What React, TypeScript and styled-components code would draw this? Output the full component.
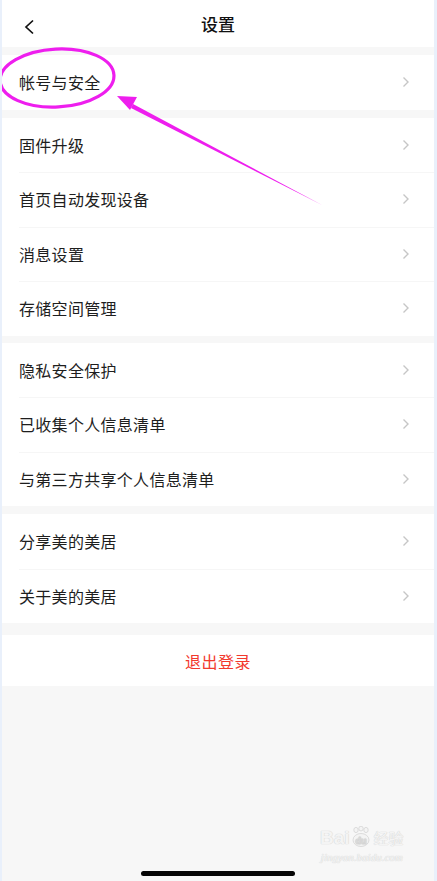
import React from "react";
import styled, { createGlobalStyle } from "styled-components";

const GlobalStyle = createGlobalStyle`
  html, body {
    margin: 0;
    padding: 0;
    background: #e9f0fb;
  }
  body {
    font-family: "Noto Sans CJK SC", "Noto Sans", sans-serif;
  }
`;

const Screen = styled.div`
  position: relative;
  margin: 0 3px 0 2px;
  height: 881px;
  background: #f7f7f7;
  overflow: hidden;
  display: flex;
  flex-direction: column;
`;

const Header = styled.div`
  height: 47px;
  background: #fff;
  display: flex;
  align-items: center;
  justify-content: center;
  position: relative;
`;

const BackButton = styled.div`
  position: absolute;
  left: 20px;
  top: 16px;
  width: 16px;
  height: 16px;
`;

const Title = styled.div`
  font-size: 17px;
  font-weight: 500;
  color: #111;
`;

const Group = styled.div<{ gap?: number }>`
  margin-top: ${(p) => p.gap ?? 8}px;
  background: #fff;
`;

const Row = styled.div`
  height: 54.5px;
  display: flex;
  align-items: center;
  padding-left: 17px;
  padding-right: 24px;
  position: relative;
  & + &::after {
    content: "";
    position: absolute;
    left: 17px;
    right: 0;
    top: 0;
    height: 1px;
    background: #f6f6f6;
  }
`;

const Label = styled.div`
  flex: 1;
  font-size: 16px;
  color: #1e1e1e;
  letter-spacing: 0.3px;
`;

const LogoutRow = styled.div`
  height: 51px;
  display: flex;
  align-items: center;
  justify-content: center;
  font-size: 16px;
  color: #f2392d;
  letter-spacing: 0.5px;
`;

const HomeBar = styled.div`
  position: absolute;
  left: 139px;
  bottom: 5px;
  width: 154px;
  height: 5px;
  border-radius: 3px;
  background: #050505;
`;

const Annotation = styled.svg`
  position: absolute;
  left: -2px;
  top: 0;
  pointer-events: none;
`;

const Watermark = styled.div`
  position: absolute;
  left: 318px;
  top: 826px;
  display: flex;
  flex-direction: column;
  align-items: center;
  white-space: nowrap;
  color: #f4f4f4;
  text-shadow: 0 0 1px #d4d4d4, 0 0 1px #d4d4d4;
`;

const WatermarkLogo = styled.div`
  display: flex;
  align-items: flex-end;
  font-family: "Liberation Sans", sans-serif;
  font-size: 19px;
  font-weight: 700;
  line-height: 20px;
`;

const WatermarkCn = styled.span`
  font-family: "Noto Sans CJK SC", sans-serif;
  font-size: 15px;
  font-weight: 400;
  margin-left: 2px;
`;

const WatermarkUrl = styled.div`
  font-family: "Liberation Serif", serif;
  font-style: italic;
  font-size: 11px;
  margin-top: 3px;
`;

const Chevron = () => (
  <svg width="8" height="12" viewBox="0 0 8 12">
    <path d="M1.5 1.5 L6 6 L1.5 10.5" fill="none" stroke="#c6c6c6" strokeWidth="1.4" />
  </svg>
);

const Paw = () => (
  <svg width="20" height="22" viewBox="0 0 20 22" style={{ margin: "0 1px" }}>
    <g fill="#f4f4f4" stroke="#d4d4d4" strokeWidth="0.8">
      <ellipse cx="5" cy="4" rx="2.2" ry="2.6" />
      <ellipse cx="10" cy="2.6" rx="2.2" ry="2.4" />
      <ellipse cx="15" cy="4" rx="2.2" ry="2.6" />
      <ellipse cx="10" cy="14" rx="8" ry="6.5" />
    </g>
    <text x="10" y="18" textAnchor="middle" fontSize="9" fill="#f4f4f4" stroke="#d4d4d4" strokeWidth="0.5" fontFamily="Liberation Sans">
      du
    </text>
  </svg>
);

const Item = ({ label }: { label: string }) => (
  <Row>
    <Label>{label}</Label>
    <Chevron />
  </Row>
);

export default function App() {
  return (
    <>
      <GlobalStyle />
      <Screen>
        <Header>
          <BackButton>
            <svg width="16" height="16" viewBox="0 0 16 16">
              <path d="M11 1.5 L4 8 L11 14.5" fill="none" stroke="#111" strokeWidth="1.7" />
            </svg>
          </BackButton>
          <Title>设置</Title>
        </Header>

        <Group>
          <Item label="帐号与安全" />
        </Group>

        <Group>
          <Item label="固件升级" />
          <Item label="首页自动发现设备" />
          <Item label="消息设置" />
          <Item label="存储空间管理" />
        </Group>

        <Group gap={7}>
          <Item label="隐私安全保护" />
          <Item label="已收集个人信息清单" />
          <Item label="与第三方共享个人信息清单" />
        </Group>

        <Group>
          <Item label="分享美的美居" />
          <Item label="关于美的美居" />
        </Group>

        <Group gap={12}>
          <LogoutRow>退出登录</LogoutRow>
        </Group>

        <Watermark>
          <WatermarkLogo>
            Bai
            <Paw />
            <WatermarkCn>经验</WatermarkCn>
          </WatermarkLogo>
          <WatermarkUrl>jingyan.baidu.com</WatermarkUrl>
        </Watermark>

        <HomeBar />

        <Annotation width="437" height="230" viewBox="0 0 437 230">
          <ellipse
            cx="57"
            cy="78"
            rx="57"
            ry="29"
            fill="none"
            stroke="#ee1eee"
            strokeWidth="3.2"
            transform="rotate(-3 57 78)"
          />
          <polygon points="322,205 133,104 131,108" fill="#ee1eee" />
          <polygon points="117,96 137,97 130,110" fill="#ee1eee" />
        </Annotation>
      </Screen>
    </>
  );
}
